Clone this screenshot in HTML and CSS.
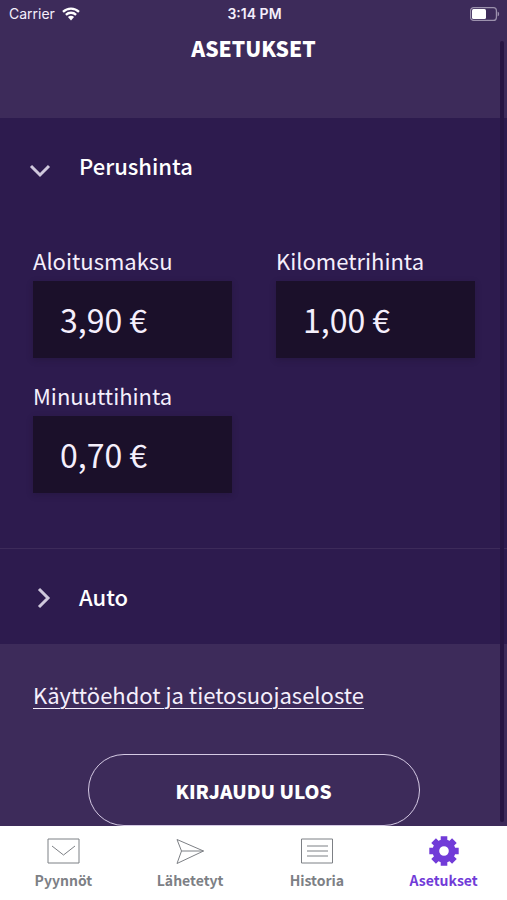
FILE: index.html
```html
<!DOCTYPE html>
<html lang="fi">
<head>
<meta charset="utf-8">
<meta name="viewport" content="width=device-width, initial-scale=1">
<title>Asetukset</title>
<link rel="stylesheet" href="styles.css">
</head>
<body>
<div class="app">
  <div class="status">
    <div class="carrier">
      <span>Carrier</span>
      <svg class="wifi" viewBox="0 0 18 14" aria-hidden="true">
        <path d="M1 4.8a11.6 11.6 0 0 1 16 0M3.9 7.8a7.4 7.4 0 0 1 10.2 0" fill="none" stroke="currentColor" stroke-width="2.3"/>
        <path d="M5.9 10.1a4.5 4.5 0 0 1 6.2 0L9 13.4z" fill="currentColor"/>
      </svg>
    </div>
    <span class="time">3:14 PM</span>
    <svg class="battery" viewBox="0 0 30 14" aria-hidden="true">
      <rect x=".6" y=".6" width="25.8" height="12.8" rx="3" fill="none" stroke="#9c91ad" stroke-width="1.2"/>
      <rect x="2" y="2" width="14" height="10" rx="1.5" fill="#fff"/>
      <path d="M27.6 4.6a2.6 2.6 0 0 1 0 4.8z" fill="#9c91ad"/>
    </svg>
  </div>
  <main class="content">
    <h1 class="title">ASETUKSET</h1>
    <section class="panel">
      <h2><button class="toggle" type="button" aria-expanded="true">
        <svg class="chevron" viewBox="0 0 22 22" aria-hidden="true"><path d="M2 12l9 9 9-9"/></svg>
        <span>Perushinta</span>
      </button></h2>
      <div class="fields">
        <div class="field"><label for="start">Aloitusmaksu</label><input id="start" type="text" value="3,90 €"></div>
        <div class="field"><label for="km">Kilometrihinta</label><input id="km" type="text" value="1,00 €"></div>
        <div class="field"><label for="minute">Minuuttihinta</label><input id="minute" type="text" value="0,70 €"></div>
      </div>
    </section>
    <section class="panel">
      <h2><button class="toggle" type="button" aria-expanded="false">
        <svg class="chevron" viewBox="0 0 22 22" aria-hidden="true"><path d="M10 4l9 9-9 9"/></svg>
        <span>Auto</span>
      </button></h2>
    </section>
    <a class="terms" href="#terms">Käyttöehdot ja tietosuojaseloste</a>
    <button class="logout" type="button">KIRJAUDU ULOS</button>
    <div class="scrollbar"></div>
  </main>
  <nav class="tabs">
    <a class="tab" href="#requests">
      <svg viewBox="0 0 34 30" aria-hidden="true"><path d="M2 3h31v24H2zM6 10l11.500 9L29 10"/></svg>
      <span>Pyynnöt</span>
    </a>
    <a class="tab" href="#sent">
      <svg viewBox="0 0 34 30" aria-hidden="true"><path d="M4 3.500L30.500 15 4 27.500 8.500 15zM8.500 15h22"/></svg>
      <span>Lähetetyt</span>
    </a>
    <a class="tab" href="#history">
      <svg viewBox="0 0 34 30" aria-hidden="true"><path d="M1.500 3h31v24h-31zM7 10h21M7 15h21M7 20h21"/></svg>
      <span>Historia</span>
    </a>
    <a class="tab active" href="#settings" aria-current="page">
      <svg viewBox="0 0 34 30" aria-hidden="true">
        <g fill="currentColor" stroke="none">
          <path fill-rule="evenodd" d="M17 3.500a11.500 11.500 0 1 0 0 23 11.500 11.500 0 1 0 0-23zm0 6.700a4.800 4.800 0 1 1 0 9.600 4.800 4.800 0 1 1 0-9.600z"/>
          <path id="tooth" d="M13.700 0.300h6.600v5h-6.600zM13.700 24.700h6.600v5h-6.600z"/>
          <use href="#tooth" transform="rotate(45 17 15)"/>
          <use href="#tooth" transform="rotate(90 17 15)"/>
          <use href="#tooth" transform="rotate(135 17 15)"/>
        </g>
      </svg>
      <span>Asetukset</span>
    </a>
  </nav>
</div>
</body>
</html>
```
FILE: styles.css
```css
* { box-sizing: border-box; }

body {
  margin: 0;
  background: #3d2b5a;
  color: #f5effc;
  font-family: "Noto Sans CJK JP", "Noto Sans", sans-serif;
}

h1, h2 { margin: 0; font-size: inherit; }

button, input { font: inherit; color: inherit; }

.app {
  display: flex;
  flex-direction: column;
  height: 100vh;
}

.status {
  display: grid;
  grid-template-columns: 1fr auto 1fr;
  align-items: center;
  height: 28px;
  padding: 0 7px 0 9px;
  font: 14px/28px Inter, sans-serif;
}

.carrier { display: flex; align-items: center; gap: 7px; }
.wifi { width: 18px; height: 14px; color: #fff; }
.time { font-weight: 600; }
.battery { width: 30px; height: 14px; justify-self: end; }

.content {
  position: relative;
  flex: 1;
  min-height: 0;
  overflow: hidden;
  display: flex;
  flex-direction: column;
}

.title {
  flex: none;
  height: 90px;
  padding-top: 4px;
  color: #fff;
  font-size: 21px;
  font-weight: 900;
  line-height: 32px;
  text-align: center;
}

.panel {
  flex: none;
  background: #2d1b4e;
}

.panel + .panel { border-top: 1px solid #3d2b5a; }

.toggle {
  display: flex;
  align-items: center;
  gap: 28px;
  width: 100%;
  height: 95px;
  padding: 0 29px 2px;
  border: 0;
  background: none;
  color: #fff;
  font-size: 22px;
  font-weight: 500;
  line-height: 32px;
}

.chevron {
  width: 22px;
  height: 22px;
  overflow: visible;
  fill: none;
  stroke: #cfc8dc;
  stroke-width: 3;
}

.fields {
  display: grid;
  grid-template-columns: 1fr 1fr;
  gap: 20px 44px;
  padding: 30px 32px 55px 33px;
}

.field { display: flex; flex-direction: column; gap: 4px; }

.field label {
  font-size: 22px;
  line-height: 34px;
}

.field input {
  width: 100%;
  height: 77px;
  padding: 0 27px 2px;
  border: 0;
  border-radius: 0;
  background: #1b102a;
  box-shadow: 0 2px 6px rgb(27 16 42 / 30%);
  font-size: 32px;
}

.terms {
  flex: none;
  align-self: flex-start;
  margin: 32px 33px 42px;
  color: inherit;
  font-size: 22px;
  line-height: 36px;
  text-decoration-thickness: 1px;
  text-underline-offset: 4px;
}

.logout {
  flex: none;
  align-self: center;
  width: 332px;
  max-width: 100%;
  height: 72px;
  border: 1px solid #d5cae4;
  border-radius: 36px;
  background: none;
  color: #fff;
  font-size: 19px;
  font-weight: 900;
}

.scrollbar {
  position: absolute;
  top: 13px;
  right: 3px;
  bottom: 4px;
  width: 4px;
  border-radius: 2px;
  background: #271643;
}

.tabs {
  display: grid;
  grid-template-columns: repeat(4, 1fr);
  height: 74px;
  background: #fff;
}

.tab {
  display: flex;
  flex-direction: column;
  align-items: center;
  gap: 2px;
  padding-top: 10px;
  color: #7d8085;
  font-size: 14px;
  font-weight: 700;
  line-height: 24px;
  text-decoration: none;
}

.tab svg {
  width: 34px;
  height: 30px;
  fill: none;
  stroke: currentColor;
  stroke-width: 1;
}

.tab.active { color: #713bd8; }
```
